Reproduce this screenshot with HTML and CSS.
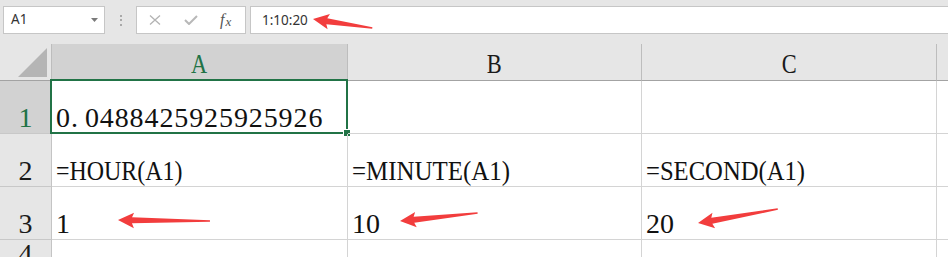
FILE: index.html
```html
<!DOCTYPE html>
<html lang="zh">
<head>
<meta charset="utf-8">
<title>Excel</title>
<link rel="stylesheet" href="styles.css">
</head>
<body>
<div class="app">
  <div class="toolbar">
    <div class="namebox">
      <span class="ref">A1</span>
      <svg class="caret" width="7" height="4" viewBox="0 0 7 4"><path d="M0 0H7L3.5 4Z" fill="#7a7a7a"/></svg>
    </div>
    <div class="dots"><i></i><i></i><i></i></div>
    <div class="fnbox">
      <svg class="ico" width="12" height="10" viewBox="0 0 12 10"><path d="M1 0.5L11 9.5M11 0.5L1 9.5" stroke="#b3b3b3" stroke-width="1.3" fill="none"/></svg>
      <svg class="ico" width="14" height="10" viewBox="0 0 14 10"><path d="M1 5L5 9L13 1" stroke="#b8b8b8" stroke-width="2" fill="none"/></svg>
      <span class="fx"><i>f</i><span class="fxx">x</span></span>
    </div>
    <div class="formula">1:10:20</div>
  </div>

  <div class="sheet">
    <div class="corner">
      <svg width="30" height="29" viewBox="0 0 30 29"><path d="M0 29H29V0Z" fill="#b5b5b5"/></svg>
    </div>
    <div class="colhdr sel"><span class="lt">A</span></div>
    <div class="colhdr"><span class="lt">B</span></div>
    <div class="colhdr"><span class="lt">C</span></div>
    <div class="colhdr rest"></div>

    <div class="rowhdr sel">1</div>
    <div class="cell a1">
      <span class="num">0<span class="dot">.</span>0488425925925926</span>
      <div class="selection"><span class="handle"></span></div>
    </div>
    <div class="cell"></div>
    <div class="cell"></div>
    <div class="cell rest"></div>

    <div class="rowhdr">2</div>
    <div class="cell"><span class="fm fm-hour">=HOUR(A1)</span></div>
    <div class="cell"><span class="fm fm-min">=MINUTE(A1)</span></div>
    <div class="cell"><span class="fm fm-sec">=SECOND(A1)</span></div>
    <div class="cell rest"></div>

    <div class="rowhdr">3</div>
    <div class="cell"><span class="val">1</span></div>
    <div class="cell"><span class="val">10</span></div>
    <div class="cell"><span class="val">20</span></div>
    <div class="cell rest"></div>

    <div class="rowhdr last">4</div>
    <div class="cell"></div>
    <div class="cell"></div>
    <div class="cell"></div>
    <div class="cell rest"></div>
  </div>

  <svg class="arrows" width="948" height="257" viewBox="0 0 948 257">
    <g fill="#f23d3d">
      <polygon transform="translate(313 19) rotate(8.7)" points="0,0 16,-7.5 14,-2.8 60,-0.8 60,0.8 14,3.2 16,8"/>
      <polygon transform="translate(118 220) rotate(0.6)" points="0,0 16,-7.5 14,-2.8 92,-0.8 92,0.8 14,3.2 16,8"/>
      <polygon transform="translate(400 221) rotate(-5.9)" points="0,0 16,-7.5 14,-2.8 78,-0.8 78,0.8 14,3.2 16,8"/>
      <polygon transform="translate(698 223) rotate(-9.9)" points="0,0 16,-7.5 14,-2.8 81,-0.8 81,0.8 14,3.2 16,8"/>
    </g>
  </svg>
</div>
</body>
</html>
```

FILE: styles.css
```css
* { box-sizing: border-box; }
html, body { margin: 0; padding: 0; }
body {
  width: 948px;
  height: 257px;
  overflow: hidden;
  background: #e6e6e6;
  font-family: "Noto Sans", "Liberation Sans", sans-serif;
}
.app { position: relative; width: 948px; height: 257px; }

.toolbar {
  height: 44px;
  display: flex;
  align-items: flex-start;
  padding-top: 6px;
  padding-left: 3px;
  background: #e6e6e6;
}
.namebox {
  width: 102px;
  height: 28px;
  background: #fff;
  border: 1px solid #c6c6c6;
  display: flex;
  align-items: center;
  justify-content: space-between;
  padding: 0 6px 0 7px;
}
.ref { font-size: 13.5px; color: #333; line-height: 1; }
.caret { display: block; margin-top: -1px; }
.dots {
  width: 31px;
  height: 28px;
  display: flex;
  flex-direction: column;
  align-items: center;
  justify-content: center;
  gap: 2.5px;
}
.dots i { display: block; width: 2px; height: 2px; background: #a9a9a9; }
.fnbox {
  width: 110px;
  height: 28px;
  background: #fff;
  border: 1px solid #c6c6c6;
  display: flex;
  align-items: center;
  padding-left: 12px;
  gap: 23px;
}
.ico { display: block; }
.fx {
  font-family: "Liberation Serif", "Times New Roman", "DejaVu Serif", serif;
  font-style: italic;
  color: #555;
  font-size: 16px;
  line-height: 1;
  margin-left: -1px;
}
.fx i { font-style: italic; }
.fxx { font-size: 13px; position: relative; top: 1px; margin-left: 1px; }
.formula {
  flex: 1;
  height: 28px;
  margin-left: 4px;
  background: #fff;
  border: 1px solid #c6c6c6;
  border-right: none;
  font-size: 13.5px;
  color: #333;
  line-height: 26px;
  padding-left: 11px;
}

.sheet {
  display: grid;
  grid-template-columns: 52px 296px 294px 295px 1fr;
  grid-template-rows: 37px 53px 53px 53px 1fr;
  height: 213px;
  background: #fff;
  color: #111;
}
.corner {
  background: #e6e6e6;
  border-right: 1px solid #bdbdbd;
  border-bottom: 1px solid #a3a3a3;
  display: flex;
  align-items: flex-end;
  justify-content: flex-end;
  padding: 0 3px 3px 0;
}
.corner svg { display: block; }
.colhdr, .rowhdr, .cell {
  font-family: "Liberation Serif", "Times New Roman", "DejaVu Serif", serif;
}
.colhdr {
  background: #e6e6e6;
  border-right: 1px solid #bdbdbd;
  border-bottom: 1px solid #a3a3a3;
  font-size: 28px;
  line-height: 28px;
  text-align: center;
  display: flex;
  align-items: flex-end;
  justify-content: center;
  padding-bottom: 2px;
  color: #1a1a1a;
}
.lt { display: inline-block; transform: scaleX(0.8); }
.colhdr.sel { background: #d2d2d2; color: #217346; }
.colhdr.rest { border-right: none; }

.rowhdr {
  background: #e6e6e6;
  border-right: 1px solid #c4c4c4;
  border-bottom: 1px solid #c8c8c8;
  font-size: 28px;
  line-height: 28px;
  display: flex;
  align-items: flex-end;
  justify-content: center;
  padding-bottom: 1px;
  color: #1a1a1a;
}
.rowhdr.sel { background: #d2d2d2; color: #217346; }
.rowhdr.last { border-bottom: none; }

.cell {
  border-right: 1px solid #d4d4d4;
  border-bottom: 1px solid #d4d4d4;
  font-size: 28px;
  line-height: 28px;
  display: flex;
  align-items: flex-end;
  padding: 0 0 1px 4px;
  white-space: nowrap;
  position: relative;
}
.cell.rest { border-right: none; }

.num { letter-spacing: 0.9px; }
.dot { display: inline-block; width: 14px; }
.fm { display: inline-block; transform-origin: left bottom; }
.fm-hour { transform: scaleX(0.855); }
.fm-min { transform: scaleX(0.89); }
.fm-sec { transform: scaleX(0.88); }

.selection {
  position: absolute;
  left: -2px;
  top: -2px;
  right: -1px;
  bottom: -1px;
  border: 2px solid #217346;
  pointer-events: none;
}
.handle {
  position: absolute;
  right: -4px;
  bottom: -4px;
  width: 6px;
  height: 6px;
  background: #217346;
  outline: 1px solid #fff;
}

.arrows {
  position: absolute;
  left: 0;
  top: 0;
  pointer-events: none;
}
```
